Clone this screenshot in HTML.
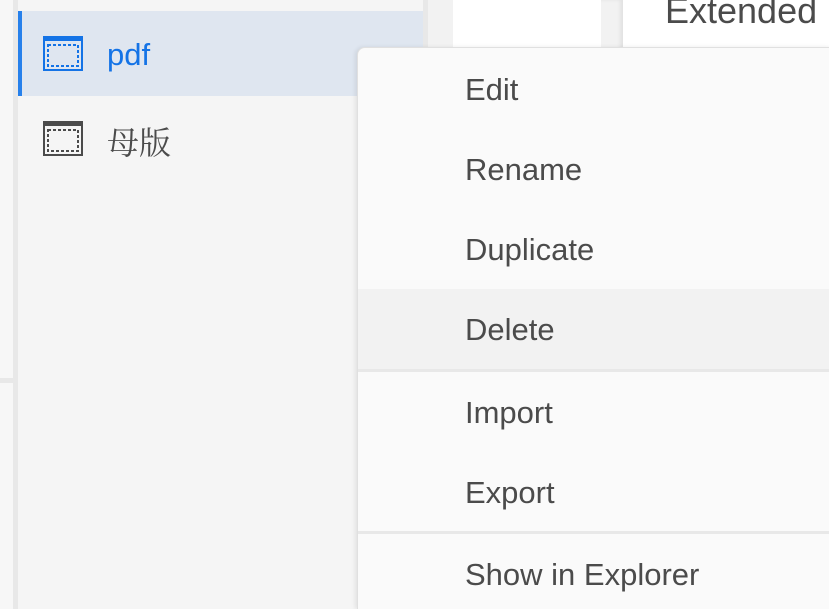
<!DOCTYPE html>
<html><head><meta charset="utf-8"><style>
*{margin:0;padding:0;box-sizing:border-box}
html,body{width:829px;height:609px;overflow:hidden}
body{background:#f5f5f5;position:relative;font-family:"Liberation Sans","Noto Sans CJK SC",sans-serif}
.a{position:absolute}
.mi{position:absolute;left:107px;font-size:31px;color:#4b4b4b;white-space:nowrap;line-height:80px;height:80px;width:472px}
</style></head><body>
<div class="a" style="left:0;top:0;width:13px;height:609px;background:#f7f7f7"></div>
<div class="a" style="left:0;top:378px;width:13px;height:5px;background:#e8e8e8"></div>
<div class="a" style="left:13px;top:0;width:5px;height:609px;background:#e8e8e8"></div>
<div class="a" style="left:18px;top:0;width:405px;height:609px;background:#f5f5f5"></div>
<div class="a" style="left:18px;top:11px;width:405px;height:85px;background:#dfe6f0"></div>
<div class="a" style="left:18px;top:11px;width:4px;height:85px;background:#2680eb"></div>
<div class="a" style="left:423px;top:0;width:5px;height:609px;background:#e8e8e8"></div>
<div class="a" style="left:428px;top:0;width:25px;height:609px;background:#f2f2f2"></div>
<div class="a" style="left:453px;top:0;width:148px;height:609px;background:#fff"></div>
<div class="a" style="left:601px;top:0;width:22px;height:609px;background:#f2f2f2;box-shadow:inset -3px 0 3px #e2e2e2"></div>
<div class="a" style="left:623px;top:0;width:206px;height:609px;background:#fff"></div>
<div class="a" style="left:665px;top:-10px;font-size:36px;color:#4b4b4b">Extended</div>

<svg class="a" style="left:43px;top:36px" width="40" height="35" viewBox="0 0 40 35"><rect x="1" y="1" width="38" height="33" fill="none" stroke="#1473e6" stroke-width="2"/><rect x="0" y="0" width="40" height="5" fill="#1473e6"/><rect x="5" y="9" width="30" height="21" fill="none" stroke="#1473e6" stroke-width="2" stroke-dasharray="3 2"/></svg>
<div class="a" style="left:107px;top:37px;font-size:31px;color:#1473e6">pdf</div>
<svg class="a" style="left:43px;top:121px" width="40" height="35" viewBox="0 0 40 35"><rect x="1" y="1" width="38" height="33" fill="none" stroke="#4b4b4b" stroke-width="2"/><rect x="0" y="0" width="40" height="5" fill="#4b4b4b"/><rect x="5" y="9" width="30" height="21" fill="none" stroke="#4b4b4b" stroke-width="2" stroke-dasharray="3 2"/></svg>
<div class="a" style="left:107px;top:118px;font-size:32px;color:#4b4b4b;font-family:'Noto Serif CJK SC',serif">母版</div>

<div class="a" style="left:357px;top:47px;width:480px;height:562px;background:#fafafa;border:1px solid #e0e0e0;border-bottom:none;border-radius:8px 8px 0 0;box-shadow:-2px 0 4px rgba(0,0,0,.08)">
<div class="a" style="left:0;top:241px;width:480px;height:80px;background:#f2f2f2"></div>
<div class="a" style="left:0;top:321px;width:480px;height:3px;background:#e8e8e8"></div>
<div class="a" style="left:0;top:483px;width:480px;height:3px;background:#e8e8e8"></div>
<div class="mi" style="top:2px">Edit</div>
<div class="mi" style="top:82px">Rename</div>
<div class="mi" style="top:162px">Duplicate</div>
<div class="mi" style="top:242px">Delete</div>
<div class="mi" style="top:325px">Import</div>
<div class="mi" style="top:405px">Export</div>
<div class="mi" style="top:487px">Show in Explorer</div>
</div>
</body></html>
